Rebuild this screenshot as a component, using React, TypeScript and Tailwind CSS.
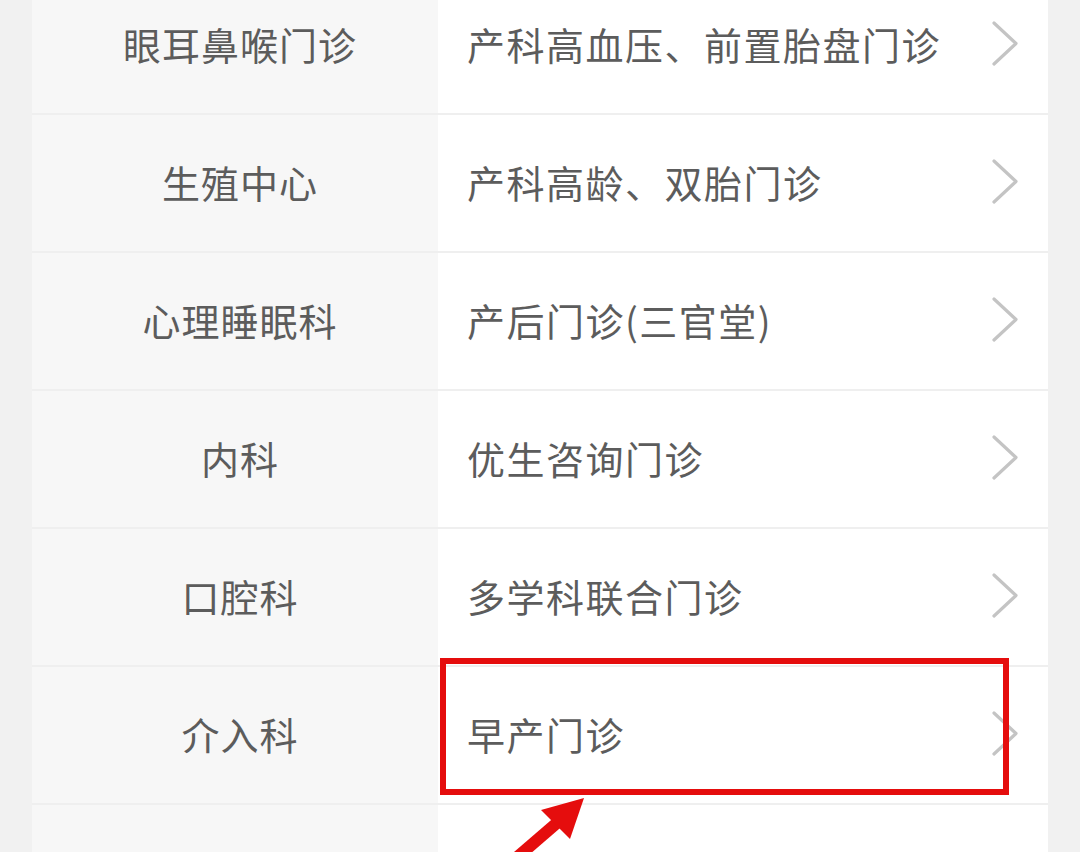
import React from "react";

const rows: [string, string][] = [
  ["眼耳鼻喉门诊", "产科高血压、前置胎盘门诊"],
  ["生殖中心", "产科高龄、双胎门诊"],
  ["心理睡眠科", "产后门诊(三官堂)"],
  ["内科", "优生咨询门诊"],
  ["口腔科", "多学科联合门诊"],
  ["介入科", "早产门诊"],
  ["", ""],
];

function Chevron() {
  return (
    <svg width="30" height="48" viewBox="0 0 30 48" className="shrink-0 mt-[2px]">
      <path d="M4 3 L26 23.5 L4 44" fill="none" stroke="#c4c4c4" strokeWidth="3.2" strokeLinecap="round" strokeLinejoin="round" />
    </svg>
  );
}

export default function App() {
  return (
    <div
      className="relative w-[1080px] h-[852px] overflow-hidden bg-[#f1f1f1]"
      style={{ fontFamily: '"Noto Sans CJK SC", "Noto Sans", sans-serif' }}
    >
      <div className="ml-[32px] w-[1016px] -mt-[23px] rounded-[16px] overflow-hidden bg-white">
        {rows.map(([l, r], i) => (
          <div key={i} className="flex h-[138px] border-b-2 border-[#efefef]">
            <div className="w-[406px] bg-[#f7f7f7] flex items-center justify-center text-[38px] tracking-[1px] text-[#5c5c5c] pl-[10px] pb-[4px]">
              {l}
            </div>
            <div className="flex-1 bg-white flex items-center pl-[29px] pr-[28px] pb-[4px] text-[38px] text-[#5c5c5c]">
              <span className="flex-1 tracking-[1.5px]">{r}</span>
              {r && <Chevron />}
            </div>
          </div>
        ))}
      </div>
      {/* red annotation box */}
      <div className="absolute left-[440px] top-[658px] w-[569px] h-[137px] border-[6px] border-[#e50d0d]" />
      {/* red arrow */}
      <svg className="absolute left-0 top-0" width="1080" height="852" viewBox="0 0 1080 852">
        <line x1="558" y1="822" x2="500" y2="872" stroke="#e50d0d" strokeWidth="12" />
        <polygon points="584,798 541,810 570,839" fill="#e50d0d" />
      </svg>
    </div>
  );
}
